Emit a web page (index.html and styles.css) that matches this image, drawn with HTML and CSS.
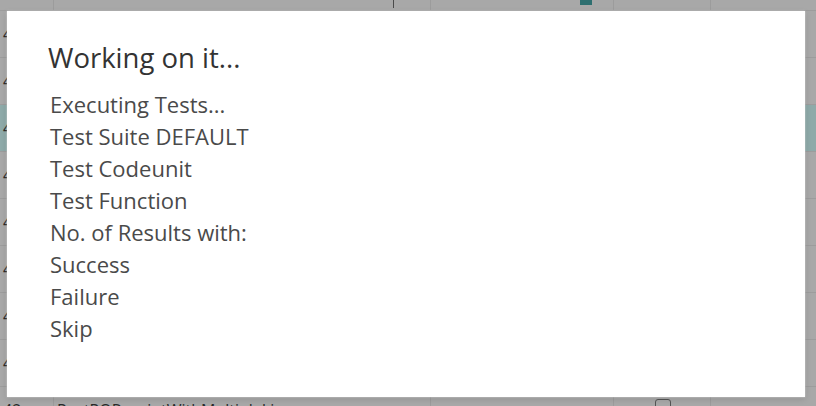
FILE: index.html
```html
<!DOCTYPE html>
<html>
<head>
<meta charset="utf-8">
<link rel="stylesheet" href="styles.css">
</head>
<body>
<div class="page">
  <div class="grid">
    <div class="row row-top"><div class="c c1"></div><div class="c c2"><span class="mark"></span></div><div class="c c3"><span class="chip"></span></div><div class="c c4"></div><div class="c c5"></div></div>
    <div class="row"><div class="c c1">41</div><div class="c c2"></div><div class="c c3"></div><div class="c c4"></div><div class="c c5"></div></div>
    <div class="row"><div class="c c1">41</div><div class="c c2"></div><div class="c c3"></div><div class="c c4"></div><div class="c c5"></div></div>
    <div class="row sel"><div class="c c1">41</div><div class="c c2"></div><div class="c c3"></div><div class="c c4"></div><div class="c c5"></div></div>
    <div class="row"><div class="c c1">42</div><div class="c c2"></div><div class="c c3"></div><div class="c c4"></div><div class="c c5"></div></div>
    <div class="row"><div class="c c1">42</div><div class="c c2"></div><div class="c c3"></div><div class="c c4"></div><div class="c c5"></div></div>
    <div class="row"><div class="c c1">42</div><div class="c c2"></div><div class="c c3"></div><div class="c c4"></div><div class="c c5"></div></div>
    <div class="row"><div class="c c1">42</div><div class="c c2"></div><div class="c c3"></div><div class="c c4"></div><div class="c c5"></div></div>
    <div class="row"><div class="c c1">42</div><div class="c c2"></div><div class="c c3"></div><div class="c c4"></div><div class="c c5"></div></div>
    <div class="row"><div class="c c1">42</div><div class="c c2">PostPOReceiptWithMultipleLines</div><div class="c c3"></div><div class="c c4"><span class="box"></span></div><div class="c c5"></div></div>
  </div>

  <div class="dialog">
    <h1 class="title">Working on it...</h1>
    <div class="lines">
      <div>Executing Tests...</div>
      <div>Test Suite DEFAULT</div>
      <div>Test Codeunit</div>
      <div>Test Function</div>
      <div>No. of Results with:</div>
      <div>Success</div>
      <div>Failure</div>
      <div>Skip</div>
    </div>
  </div>
</div>
</body>
</html>
```

FILE: styles.css
```css
html, body {
  margin: 0;
  padding: 0;
  width: 816px;
  height: 406px;
  overflow: hidden;
  background: #a8a8a8;
  font-family: "Open Sans", "Liberation Sans", sans-serif;
}

.page {
  position: relative;
  width: 816px;
  height: 406px;
  overflow: hidden;
}

.grid {
  display: flex;
  flex-direction: column;
}

.row {
  display: grid;
  grid-template-columns: 54px 377px 183px 97px 1fr;
  height: 47px;
  border-bottom: 1px solid #9c9c9c;
  box-sizing: border-box;
  color: #2a2a2a;
  font-size: 16px;
}

.row-top {
  height: 11px;
}

.row.sel {
  background: #8eaaa9;
}

.c {
  border-right: 1px solid #9c9c9c;
  display: flex;
  align-items: center;
  padding-left: 3px;
  white-space: nowrap;
  overflow: hidden;
}

.c5 { border-right: none; }

.row:last-child .c {
  align-items: flex-start;
  padding-top: 12px;
}

.mark {
  display: block;
  width: 1px;
  height: 8px;
  margin-left: 336px;
  margin-top: -3px;
  background: #4a4a4a;
}

.chip {
  display: block;
  width: 12px;
  height: 5px;
  margin-left: 146px;
  margin-top: -6px;
  background: #2e6f70;
}

.box {
  display: block;
  width: 16px;
  height: 12px;
  margin-left: 38px;
  border: 1px solid #555;
  border-radius: 3px;
  box-sizing: border-box;
}

.dialog {
  position: absolute;
  left: 7px;
  top: 11px;
  width: 798px;
  height: 386px;
  background: #fff;
  box-shadow: 0 0 2px rgba(255,255,255,0.6), 0 2px 6px rgba(0,0,0,0.15);
  box-sizing: border-box;
  padding: 28px 0 0 41px;
}

.title {
  margin: 0;
  font-weight: 400;
  font-size: 27.5px;
  line-height: 38px;
  color: #333;
}

.lines {
  margin-top: 11px;
  padding-left: 2px;
  font-size: 22px;
  line-height: 32px;
  color: #4a4a4a;
}
```
